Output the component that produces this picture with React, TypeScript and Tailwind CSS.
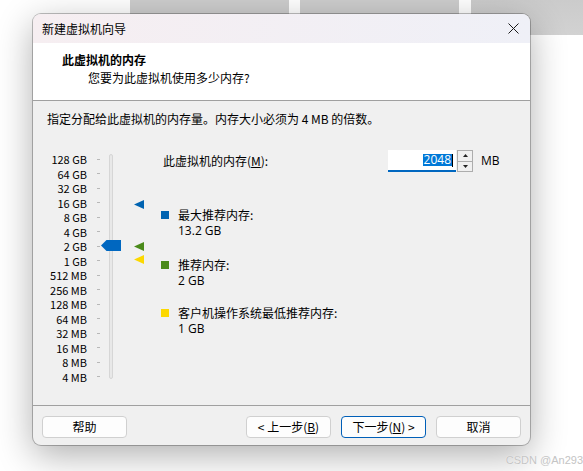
import React from "react";

const labels = [
  "128 GB", "64 GB", "32 GB", "16 GB", "8 GB", "4 GB", "2 GB", "1 GB",
  "512 MB", "256 MB", "128 MB", "64 MB", "32 MB", "16 MB", "8 MB", "4 MB",
];

const cjk = { fontFamily: '"Noto Sans CJK SC", sans-serif' };
const ui = { fontFamily: '"Open Sans", "Noto Sans CJK SC", sans-serif' };

function Tri({ color }: { color: string }) {
  return (
    <svg width="10" height="9" viewBox="0 0 10 9">
      <polygon points="0,4.5 10,0 10,9" fill={color} />
    </svg>
  );
}

function Btn({ children, primary }: { children: React.ReactNode; primary?: boolean }) {
  return (
    <div
      className={
        "flex h-[22px] w-[85px] items-center justify-center rounded-[4px] bg-[#fdfdfd] text-[12px] leading-none text-black " +
        (primary ? "border border-[#005fb8]" : "border border-[#d0d0d0]")
      }
      style={cjk}
    >
      {children}
    </div>
  );
}

function Legend({ color, title, value, className }: { color: string; title: string; value: string; className: string }) {
  return (
    <div className={"flex " + className}>
      <span className="mt-[4px] h-[8px] w-[8px]" style={{ backgroundColor: color }} />
      <div className="ml-[9px] flex flex-col text-[12px] leading-[16px] text-black">
        <span>{title}</span>
        <span style={ui}>{value}</span>
      </div>
    </div>
  );
}

export default function App() {
  return (
    <div className="relative h-[471px] w-[583px] overflow-hidden bg-white" style={cjk}>
      {/* background windows */}
      <div className="absolute left-[130px] top-0 h-[16px] w-[159px] bg-[#cdcdcd]" />
      <div className="absolute left-[300px] top-0 h-[16px] w-[159px] bg-[#cdcdcd]" />
      <div className="absolute left-[471px] top-0 h-[35px] w-[112px] bg-gradient-to-b from-[#cbcbcb] to-[#d2d2d2]" />

      {/* dialog */}
      <div className="absolute left-[33px] top-[14px] flex h-[431px] w-[497px] flex-col overflow-hidden rounded-[8px] bg-[#f0f0f0] shadow-[0_0_0_1px_rgba(0,0,0,0.25),0_10px_36px_rgba(0,0,0,0.32)]">
        {/* title bar */}
        <div className="flex h-[29px] items-center justify-between bg-gradient-to-r from-[#f6eef1] to-[#eff0f7] pl-[9px] pr-[11px]">
          <span className="text-[12px] text-black">新建虚拟机向导</span>
          <svg width="11" height="11" viewBox="0 0 11 11">
            <path d="M0.5 0.5 L10.5 10.5 M10.5 0.5 L0.5 10.5" stroke="#1a1a1a" strokeWidth="1" />
          </svg>
        </div>

        {/* header */}
        <div className="flex h-[57px] flex-col bg-white pl-[29px] pt-[8px]">
          <div className="text-[12px] font-bold leading-[18px] text-black">此虚拟机的内存</div>
          <div className="pl-[26px] text-[12px] leading-[18px] text-black">您要为此虚拟机使用多少内存?</div>
        </div>
        <div className="h-px bg-[#a0a0a0]" />

        {/* body */}
        <div className="flex flex-1 flex-col">
          <div className="pl-[14px] pt-[10px] text-[12px] leading-[16px] text-black">
            指定分配给此虚拟机的内存量。内存大小必须为 4 MB 的倍数。
          </div>

          <div className="mt-[23px] flex">
            {/* slider */}
            <div className="relative ml-[14px] flex w-[114px]">
              <div className="mt-[2px] flex h-[231.5px] flex-col justify-between">
                {labels.map((l) => (
                  <div key={l} className="flex h-[14px] items-center">
                    <span className="w-[40px] text-right text-[11px] leading-[14px] text-black">{l}</span>
                    <span className="ml-[10px] h-px w-[3px] bg-[#b8b8b8]" />
                  </div>
                ))}
              </div>
              <div className="ml-[9px] mt-[4px] h-[225px] w-[4px] rounded-[2px] border border-[#d6d6d6] bg-[#e8e8e8]" />

              <svg className="absolute left-[54px] top-[90px]" width="20" height="11" viewBox="0 0 20 11">
                <polygon points="0,5.5 5.5,0 20,0 20,11 5.5,11" fill="#0067c0" />
              </svg>
              <div className="absolute left-[87px] top-[50px]"><Tri color="#0063b1" /></div>
              <div className="absolute left-[87px] top-[92px]"><Tri color="#4a8a1a" /></div>
              <div className="absolute left-[87px] top-[105px]"><Tri color="#fcd800" /></div>
            </div>

            {/* right content */}
            <div className="flex flex-1 flex-col">
              <div className="flex h-[22px] items-center">
                <span className="w-[227px] pl-[2px] text-[12px] text-black">
                  此虚拟机的内存(<span className="underline">M</span>):
                </span>
                <div className="relative flex h-[22px] w-[68px] items-center justify-end border-b-2 border-[#0067c0] bg-white pr-[3px]">
                  <span className="bg-[#0078d7] px-[1px] text-[12px] leading-[12px] text-white" style={ui}>2048</span>
                  <span className="h-[13px] w-px bg-black" />
                </div>
                <div className="ml-[1px] flex h-[22px] w-[16px] flex-col border border-[#adadad] bg-[#f0f0f0]">
                  <div className="flex flex-1 items-center justify-center border-b border-[#adadad]">
                    <svg width="5" height="3" viewBox="0 0 5 3"><polygon points="0,3 2.5,0 5,3" fill="#222" /></svg>
                  </div>
                  <div className="flex flex-1 items-center justify-center">
                    <svg width="5" height="3" viewBox="0 0 5 3"><polygon points="0,0 5,0 2.5,3" fill="#222" /></svg>
                  </div>
                </div>
                <span className="ml-[8px] text-[12px] text-black" style={ui}>MB</span>
              </div>

              <Legend className="mt-[35px]" color="#0063b1" title="最大推荐内存:" value="13.2 GB" />
              <Legend className="mt-[18px]" color="#4a8a1a" title="推荐内存:" value="2 GB" />
              <Legend className="mt-[16px]" color="#fcd800" title="客户机操作系统最低推荐内存:" value="1 GB" />
            </div>
          </div>
        </div>

        <div className="h-px bg-[#a0a0a0]" />
        {/* footer */}
        <div className="flex h-[39px] justify-between px-[9px] pt-[10px]">
          <Btn>帮助</Btn>
          <div className="flex gap-[10px]">
            <Btn>&lt; 上一步(<span className="underline">B</span>)</Btn>
            <Btn primary>下一步(<span className="underline">N</span>) &gt;</Btn>
            <Btn>取消</Btn>
          </div>
        </div>
      </div>

      {/* watermark */}
      <div
        className="absolute right-0 top-[452px] text-[11px] leading-[16px] text-[#c4c4c4]"
        style={{ fontFamily: '"Liberation Sans", sans-serif', textShadow: "0 0 1px #fff" }}
      >
        CSDN @An293
      </div>
    </div>
  );
}
